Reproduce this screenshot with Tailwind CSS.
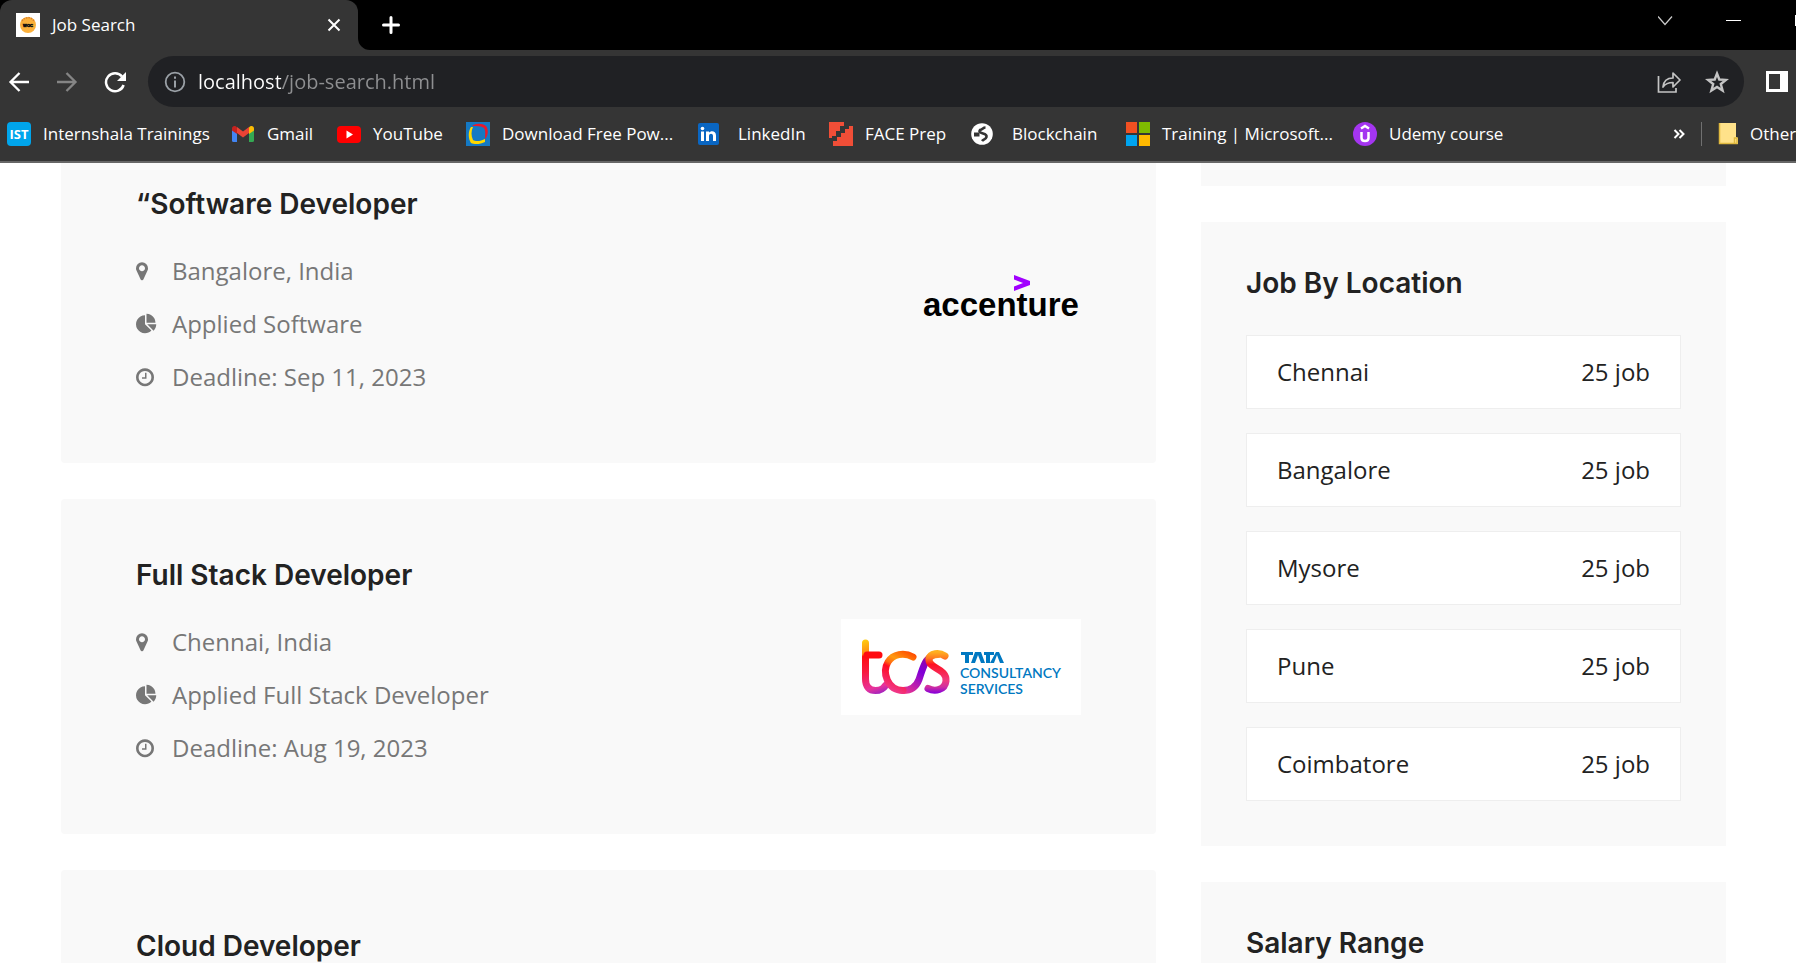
<!DOCTYPE html>
<html lang="en">
<head>
<meta charset="utf-8">
<title>Job Search</title>
<script src="https://cdn.jsdelivr.net/npm/@tailwindcss/browser@4"></script>
</head>
<body class="h-screen overflow-hidden bg-white font-['Open_Sans',sans-serif] text-[#222]">
<svg class="hidden" aria-hidden="true">
  <symbol id="marker" viewBox="384 -64 1792 1792"><path d="M1152 640q0-106-75-181t-181-75-181 75-75 181 75 181 181 75 181-75 75-181zm256 0q0 109-33 179l-364 774q-16 33-47.5 52t-67.5 19-67.5-19-46.5-52l-365-774q-33-70-33-179 0-212 150-362t362-150 362 150 150 362z"/></symbol>
  <symbol id="pie" viewBox="0 -64 1792 1792"><path d="M768 890l546 546q-106 108-247.5 168t-298.5 60q-209 0-385.5-103t-279.5-279.5-103-385.5 103-385.5 279.5-279.5 385.5-103v762zm187 6h773q0 157-60 298.5t-168 247.5zm709-128h-768v-768q209 0 385.5 103t279.5 279.5 103 385.5z"/></symbol>
  <symbol id="clock" viewBox="128 -64 1792 1792"><path d="M1024 544v448q0 14-9 23t-23 9h-320q-14 0-23-9t-9-23v-64q0-14 9-23t23-9h224v-352q0-14 9-23t23-9h64q14 0 23 9t9 23zm416 352q0-148-73-273t-198-198-273-73-273 73-198 198-73 273 73 273 198 198 273 73 273-73 198-198 73-273zm224 0q0 209-103 385.5t-279.5 279.5-385.5 103-385.5-103-279.5-279.5-103-385.5 103-385.5 279.5-279.5 385.5-103 385.5 103 279.5 279.5 103 385.5z"/></symbol>
</svg>
<div class="flex h-full flex-col">
  <header class="shrink-0 border-b-2 border-[#666] bg-[#353535] text-[17px] text-white">
    <!-- Tab strip -->
    <div class="flex h-[50px] bg-black">
      <div class="flex w-[358px] items-center rounded-t-xl bg-[#353535] pr-4 pl-4">
        <svg class="size-6" viewBox="0 0 24 24"><path fill="#fff" d="M0 0h24v24H0z"/><circle cx="12" cy="12" r="8" fill="#fbb03b"/><path d="M6 8a7 7 0 0 1 12 0" fill="none" stroke="#d9822b" stroke-width="1.5" stroke-dasharray="1.5 1"/><text x="12" y="14" font-family="Liberation Sans" font-weight="700" font-size="4" text-anchor="middle" fill="#111" stroke="#111" stroke-width=".6">WOC</text></svg>
        <span class="ml-3 flex-1">Job Search</span>
        <button aria-label="Close tab" class="flex size-4 items-center justify-center"><svg class="size-4" viewBox="0 0 16 16" fill="none" stroke="#fff" stroke-width="2"><path d="M2.500 2.500l11 11M13.500 2.500l-11 11"/></svg></button>
      </div>
      <svg class="h-[50px] w-3" viewBox="0 0 12 50"><path d="M0 38a12 12 0 0 0 12 12H0z" fill="#353535"/></svg>
      <button aria-label="New tab" class="ml-3 flex w-4 items-center"><svg class="size-[18px] shrink-0" viewBox="0 0 18 18" fill="none" stroke="#fff" stroke-width="3" stroke-linecap="round"><path d="M9 1.500v15M1.500 9h15"/></svg></button>
      <div class="ml-auto flex h-10 items-center">
        <button aria-label="Search tabs"><svg class="h-4 w-4" viewBox="0 0 16 16" fill="none" stroke="#ccc" stroke-width="1.200"><path d="M0 4.500l7 8 7-8"/></svg></button>
        <button aria-label="Minimize" class="ml-[52px]"><svg class="size-4" viewBox="0 0 16 16"><path d="M0 8h15v1H0z" fill="#fff"/></svg></button>
        <button aria-label="Maximize" class="ml-[53px]"><svg class="h-[11px] w-px" viewBox="0 0 1 11"><path d="M0 0h1v11H0z" fill="#fff"/></svg></button>
      </div>
    </div>
    <!-- Toolbar -->
    <div class="flex items-center pt-[6px] pl-2">
      <button aria-label="Back"><svg class="size-[22px]" viewBox="0 0 22 22" fill="none" stroke="#fff" stroke-width="2.300"><path d="M21 11H3M11.500 2L2.500 11l9 9"/></svg></button>
      <button aria-label="Forward" class="ml-[26px]"><svg class="size-[22px]" viewBox="0 0 22 22" fill="none" stroke="#858585" stroke-width="2.300"><path d="M1 11h18M10.500 2l9 9-9 9"/></svg></button>
      <button aria-label="Reload" class="ml-[26px]"><svg class="size-[22px]" viewBox="0 0 22 22"><path d="M18 5.500A9 9 0 1 0 19.600 14" fill="none" stroke="#fff" stroke-width="2.500"/><path d="M22 1v9h-9z" fill="#fff"/></svg></button>
      <div class="ml-[22px] flex h-[51px] flex-1 items-center rounded-full bg-[#202124] pr-[15px] pl-4">
        <button aria-label="Site information"><svg class="size-[22px]" viewBox="0 0 22 22"><circle cx="11" cy="11" r="9.300" fill="none" stroke="#9aa0a6" stroke-width="1.800"/><path d="M10 5.500h2v2.200h-2zM10 9.500h2v7h-2z" fill="#9aa0a6"/></svg></button>
        <input aria-label="Address" value="localhost/job-search.html" class="ml-3 min-w-0 flex-1 bg-[linear-gradient(90deg,#fff_83px,#8e8f91_83px)] bg-clip-text text-[20px] text-transparent outline-none">
        <button aria-label="Share"><svg class="size-6" viewBox="0 0 24 24" fill="none" stroke="#c4c4c4" stroke-width="1.700"><path d="M1.500 6v16H19v-4"/><path d="M6 17c.5-5.500 4-9 10-9V3l7 7-7 7v-4.500c-4.500 0-7.500 1-10 4.500z" stroke-linejoin="round"/></svg></button>
        <button aria-label="Bookmark this page" class="ml-6"><svg class="size-6" viewBox="0 0 24 24" fill="none" stroke="#c4c4c4" stroke-width="2.400"><path d="M12 3.500l2.300 6 6.700.4-5.200 4.100 1.800 6.500L12 16.900 6.400 20.500l1.800-6.500L3 9.900l6.700-.4z"/></svg></button>
      </div>
      <button aria-label="Side panel" class="mr-2 ml-[22px]"><svg class="size-[22px]" viewBox="0 0 22 22"><path d="M0 0h22v21H0zM3 3v15h11V3z" fill="#fff" fill-rule="evenodd"/></svg></button>
    </div>
    <!-- Bookmarks -->
    <nav class="flex h-[54px] items-center overflow-hidden pl-[7px] whitespace-nowrap" aria-label="Bookmarks">
      <a href="#" class="flex w-[224px] shrink-0 items-center gap-3"><svg class="size-6" viewBox="0 0 24 24"><rect width="24" height="24" rx="4" fill="#00a5ec"/><text x="12" y="17" font-family="Open Sans" font-size="13" font-weight="700" text-anchor="middle" fill="#fff">IST</text></svg>Internshala Trainings</a>
      <a href="#" class="flex w-[106px] shrink-0 items-center gap-3"><svg class="size-6" viewBox="0 0 24 24"><path d="M1 6v12.500A1.500 1.500 0 0 0 2.500 20H6V9z" fill="#4285f4"/><path d="M23 6v12.500a1.500 1.500 0 0 1-1.500 1.500H18V9z" fill="#34a853"/><path d="M6 5v6l6 4.500 6-4.500V5l-6 4.500z" fill="#ea4335"/><path d="M1 6.500v2L6 12V5.500C4 3 1 4 1 6.500z" fill="#c5221f"/><path d="M23 6.500v2L18 12V5.500C20 3 23 4 23 6.500z" fill="#fbbc04"/></svg>Gmail</a>
      <a href="#" class="flex w-[129px] shrink-0 items-center gap-3"><svg class="size-6" viewBox="0 0 24 24"><rect y="4" width="24" height="17" rx="4" fill="#f00"/><path d="M9.500 8.500l6.500 4-6.500 4z" fill="#fff"/></svg>YouTube</a>
      <a href="#" class="flex w-[230px] shrink-0 items-center gap-3"><svg class="size-6" viewBox="0 0 24 24"><path d="M0 0h24v24H0z" fill="#1479c4"/><path d="M5 5C2 9 2 17 5 21c4 2 10 1 14-1v-3c-4 2-9 3-12 1C5 14 5 9 7 5z" fill="#ffd800"/><path d="M6 4c4-3 10-3 14 0 3 4 2 10-1 13 0-4 1-8-1-11-3-2-7-2-12-2z" fill="#e8192c"/></svg>Download Free Pow...</a>
      <a href="#" class="flex w-[133px] shrink-0 items-center gap-[18px]"><svg class="size-6" viewBox="0 0 24 24"><rect x="2" y="1" width="21" height="22" rx="2" fill="#0a66c2"/><path d="M5 9.500h3V19H5zM10 9.500h3v1.300c1.500-2.300 7-2.300 7 2.600V19h-3v-5c0-3-4-3-4 0v5h-3z" fill="#fff"/><circle cx="6.500" cy="6.500" r="1.800" fill="#fff"/></svg>LinkedIn</a>
      <a href="#" class="flex w-[141px] shrink-0 items-center gap-3"><svg class="size-6" viewBox="0 0 24 24" fill="#f04e37"><path d="M0 0h15v4h-4v5H7v5H3v2H0z"/><path d="M24 4v20H4v-5h4v-4h4v-4h4V7h4V4z"/></svg>FACE Prep</a>
      <a href="#" class="flex w-[156px] shrink-0 items-center gap-[18px]"><svg class="size-6" viewBox="0 0 24 24"><circle cx="12" cy="12" r="10.800" fill="#fff"/><g fill="none" stroke="#353535"><path d="M4 12.500h5.500" stroke-width="4"/><path d="M15.500 5.500c-2.500 0-3 2-5.500 2.500-1.500 2 1 3 3 3.500s4 1 3.500 3.500-3 2-4.500 4" stroke-width="2.600"/></g></svg>Blockchain</a>
      <a href="#" class="flex w-[227px] shrink-0 items-center gap-3"><svg class="size-6" viewBox="0 0 24 24"><path d="M0 0h11v11H0z" fill="#f25022"/><path d="M13 0h11v11H13z" fill="#7fba00"/><path d="M0 13h11v11H0z" fill="#00a4ef"/><path d="M13 13h11v11H13z" fill="#ffb900"/></svg>Training | Microsoft...</a>
      <a href="#" class="flex shrink-0 items-center gap-3"><svg class="size-6" viewBox="0 0 24 24"><circle cx="12" cy="12" r="12" fill="#a435f0"/><path d="M8 6.500L12 4l4 2.500M8.500 10v6c0 4 7 4 7 0v-6" fill="none" stroke="#fff" stroke-width="2.500"/></svg>Udemy course</a>
      <button aria-label="More bookmarks" class="ml-auto shrink-0"><svg class="size-3" viewBox="0 0 12 12" fill="none" stroke="#fff" stroke-width="2"><path d="M1.500 2l4 4-4 4M6.500 2l4 4-4 4"/></svg></button>
      <span class="ml-4 h-6 w-px shrink-0 bg-[#707070]"></span>
      <a href="#" class="ml-4 flex w-[78px] shrink-0 items-center gap-2"><svg class="size-6 shrink-0" viewBox="0 0 24 24"><path d="M1 1h17v14l2 1v6H1z" fill="#ffe28a"/><path d="M1.500 1v20.500H19V16h-2.500v5.500" fill="none" stroke="#e0b93f" stroke-width="1.500"/></svg>Other bookmarks</a>
    </nav>
  </header>

  <main class="grid min-h-0 flex-1 grid-cols-[minmax(0,1fr)_525px] gap-[45px] overflow-hidden pr-[70px] pl-[61px]">
    <section class="flex flex-col gap-9" aria-label="Job listings">
      <article class="flex shrink-0 items-center justify-between rounded-b bg-[#f9f9f9] px-[75px] pt-[25px] pb-[60px]">
        <div>
          <h2 class="mb-6 font-['Inter'] text-[28px] leading-8 font-semibold">“Software Developer</h2>
          <ul class="text-[24px] text-[#777]">
            <li class="flex h-[53px] items-center gap-[15px]"><svg class="size-[21px] fill-current"><use href="#marker"/></svg>Bangalore, India</li>
            <li class="flex h-[53px] items-center gap-[15px]"><svg class="size-[21px] fill-current"><use href="#pie"/></svg>Applied Software</li>
            <li class="flex h-[53px] items-center gap-[15px]"><svg class="size-[21px] fill-current"><use href="#clock"/></svg>Deadline: Sep 11, 2023</li>
          </ul>
        </div>
        <svg class="h-[132px] w-[240px]" viewBox="0 0 240 132" role="img" aria-label="Accenture"><path d="M173 45l16 6v4l-16 6v-4.500l9-3.500-9-3.500z" fill="#a100ff"/><text x="82" y="86" font-family="Liberation Sans" font-weight="700" font-size="33">accenture</text></svg>
      </article>
      <article class="flex shrink-0 items-center justify-between rounded bg-[#f9f9f9] px-[75px] py-[60px]">
        <div>
          <h2 class="mb-6 font-['Inter'] text-[28px] leading-8 font-semibold">Full Stack Developer</h2>
          <ul class="text-[24px] text-[#777]">
            <li class="flex h-[53px] items-center gap-[15px]"><svg class="size-[21px] fill-current"><use href="#marker"/></svg>Chennai, India</li>
            <li class="flex h-[53px] items-center gap-[15px]"><svg class="size-[21px] fill-current"><use href="#pie"/></svg>Applied Full Stack Developer</li>
            <li class="flex h-[53px] items-center gap-[15px]"><svg class="size-[21px] fill-current"><use href="#clock"/></svg>Deadline: Aug 19, 2023</li>
          </ul>
        </div>
        <svg class="h-[96px] w-[240px] bg-white" viewBox="0 0 240 96" role="img" aria-label="Tata Consultancy Services">
          <defs>
            <linearGradient id="t" gradientUnits="userSpaceOnUse" x1="24" y1="20" x2="40" y2="76"><stop offset="0" stop-color="#ffd010"/><stop offset=".24" stop-color="#ff8a10"/><stop offset=".28" stop-color="#ff0a10"/><stop offset=".55" stop-color="#f81a40"/><stop offset=".85" stop-color="#e8339b"/><stop offset="1" stop-color="#9020c8"/></linearGradient>
            <linearGradient id="c" gradientUnits="userSpaceOnUse" x1="76" y1="36" x2="56" y2="74"><stop offset="0" stop-color="#ff4a00"/><stop offset=".3" stop-color="#ff9a10"/><stop offset=".45" stop-color="#ff6a10"/><stop offset=".55" stop-color="#ff0a20"/><stop offset="1" stop-color="#f0388a"/></linearGradient>
            <linearGradient id="j" gradientUnits="userSpaceOnUse" x1="62" y1="74" x2="88" y2="36"><stop offset="0" stop-color="#f0388a"/><stop offset=".6" stop-color="#8000d8"/><stop offset=".85" stop-color="#9000b0"/><stop offset="1" stop-color="#ff8a20"/></linearGradient>
            <linearGradient id="s" gradientUnits="userSpaceOnUse" x1="92" y1="33" x2="92" y2="74"><stop offset="0" stop-color="#ffb020"/><stop offset=".15" stop-color="#ff7a20"/><stop offset=".3" stop-color="#ff1020"/><stop offset=".7" stop-color="#f03b80"/><stop offset=".85" stop-color="#d030a0"/><stop offset="1" stop-color="#8a00d8"/></linearGradient>
          </defs>
          <g fill="none" stroke-width="7" stroke-linecap="round">
            <path d="M24.500 24v36c0 8 4 11.500 10 11.500s8-2 10-5" stroke="url(#t)"/>
            <path d="M26 36h12" stroke="#ff0a10"/>
            <path d="M62 71.500c7 0 13-3 16-11 4-11 6-25 19-25" stroke="url(#j)"/>
            <path d="M72 38c-9-5-20-3-25 5-6 10-1 28 15 28.500" stroke="url(#c)"/>
            <path d="M104 37c-6-4-15-3-16 3-1 10 18 9 17 22-1 9-11 11-18 7.500" stroke="url(#s)"/>
          </g>
          <g fill="#0078c1" font-family="Lato"><path d="M120 33h12v3h-4v8h-4v-8h-4zM134 33h6l4 11h-4l-3-8-3 8h-4zM143 33h10v3h-4v8h-4v-8h-2zM155 33h3l5 11h-4l-3-8-3 8h-4z"/><text x="119" y="59" font-size="14" font-weight="600">CONSULTANCY</text><text x="119" y="75" font-size="14" font-weight="600">SERVICES</text></g>
        </svg>
      </article>
      <article class="shrink-0 rounded bg-[#f9f9f9] px-[75px] py-[60px]">
        <h2 class="mb-6 font-['Inter'] text-[28px] leading-8 font-semibold">Cloud Developer</h2>
      </article>
    </section>
    <aside class="flex flex-col gap-9">
      <div class="h-[23px] shrink-0 bg-[#f9f9f9]"></div>
      <section class="shrink-0 bg-[#f9f9f9] p-[45px]">
        <h2 class="mb-9 font-['Inter'] text-[28px] leading-8 font-semibold">Job By Location</h2>
        <ul class="flex flex-col gap-6 text-[24px]">
          <li><a href="#" class="flex h-[74px] items-center justify-between border border-[#eee] bg-white px-[30px]"><span>Chennai</span><span>25 job</span></a></li>
          <li><a href="#" class="flex h-[74px] items-center justify-between border border-[#eee] bg-white px-[30px]"><span>Bangalore</span><span>25 job</span></a></li>
          <li><a href="#" class="flex h-[74px] items-center justify-between border border-[#eee] bg-white px-[30px]"><span>Mysore</span><span>25 job</span></a></li>
          <li><a href="#" class="flex h-[74px] items-center justify-between border border-[#eee] bg-white px-[30px]"><span>Pune</span><span>25 job</span></a></li>
          <li><a href="#" class="flex h-[74px] items-center justify-between border border-[#eee] bg-white px-[30px]"><span>Coimbatore</span><span>25 job</span></a></li>
        </ul>
      </section>
      <section class="shrink-0 bg-[#f9f9f9] p-[45px]">
        <h2 class="mb-9 font-['Inter'] text-[28px] leading-8 font-semibold">Salary Range</h2>
      </section>
    </aside>
  </main>
</div>
</body>
</html>
